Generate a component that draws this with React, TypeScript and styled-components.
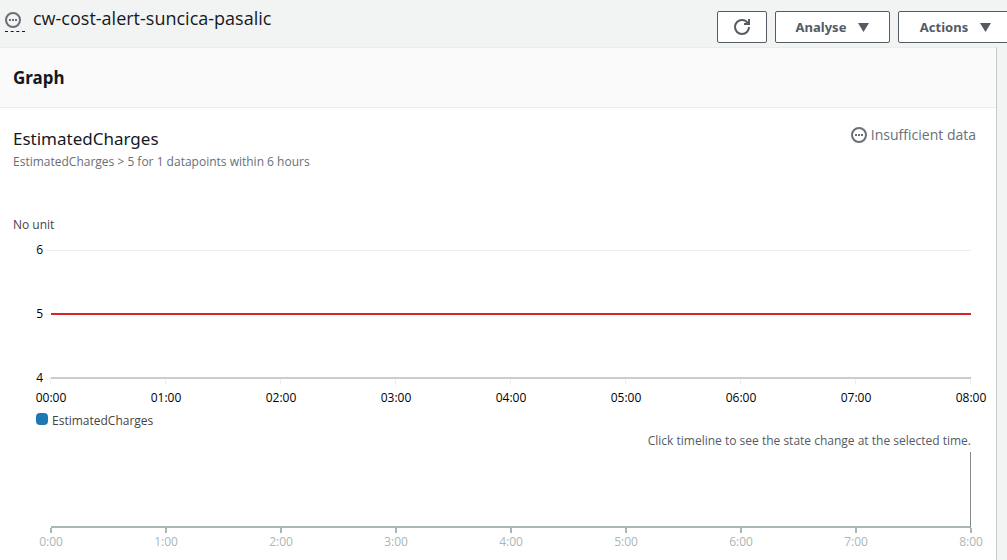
import React from "react";
import styled, { createGlobalStyle } from "styled-components";

const GlobalStyle = createGlobalStyle`
  *, *::before, *::after { box-sizing: border-box; }
  body {
    margin: 0;
    background: #f2f3f3;
    color: #16191f;
    font: 14px/20px "Open Sans", "Noto Sans", sans-serif;
    overflow-x: hidden;
  }
  h1, h2, h3, p { margin: 0; font-weight: 400; }
`;

const Page = styled.div`
  display: flex;
  flex-direction: column;
  min-height: 100vh;
  overflow: hidden;
`;

const Toolbar = styled.header`
  display: flex;
  justify-content: space-between;
  align-items: flex-start;
  padding: 10px 0 4px 5px;
`;

const AlarmName = styled.div`
  display: flex;
  gap: 8px;
`;

const StatusHint = styled.span`
  display: flex;
  align-items: flex-end;
  width: 20px;
  height: 22px;
  padding-bottom: 3px;
  border-bottom: 1px dashed #16191f;
`;

const Title = styled.h1`
  font-size: 18px;
  line-height: 16px;
`;

const Actions = styled.div`
  display: flex;
  gap: 8px;
  margin: 1px -6px 0 0;
`;

const Button = styled.button<{ $icon?: boolean }>`
  display: flex;
  align-items: center;
  justify-content: center;
  gap: 12px;
  width: ${(p) => (p.$icon ? "50px" : "115px")};
  height: 32px;
  padding: 0;
  border: 1px solid #545b64;
  border-radius: 2px;
  background: #fff;
  color: #545b64;
  font: 700 13px/20px "Noto Sans", sans-serif;
`;

const Panel = styled.main`
  flex: 1;
  margin-right: 10px;
  border-top: 1px solid #eaeded;
  border-right: 1px solid #c5cbcb;
  background: #fff;
`;

const PanelHeader = styled.div`
  padding: 18px 13px 17px;
  border-bottom: 1px solid #eaeded;
  background: #fafafa;
`;

const PanelTitle = styled.h2`
  font-family: "Noto Sans", sans-serif;
  font-size: 17px;
  font-weight: 700;
  line-height: 24px;
`;

const PanelBody = styled.div`
  padding: 19px 25px 0 13px;
`;

const MetricHeader = styled.div`
  display: flex;
  justify-content: space-between;
  align-items: flex-start;
  margin-right: -5px;
`;

const MetricTitle = styled.h3`
  font-family: "Noto Sans", sans-serif;
  font-size: 17px;
  line-height: 24px;
`;

const Note = styled.p<{ $color: string; $end?: boolean }>`
  color: ${(p) => p.$color};
  font-size: 12px;
  line-height: 22px;
  text-align: ${(p) => (p.$end ? "right" : "left")};
`;

const Status = styled.div`
  display: flex;
  align-items: center;
  gap: 4px;
  margin-top: -2px;
  color: #687078;
`;

const Chart = styled.section`
  margin-top: 41px;
`;

const Levels = styled.div`
  display: flex;
  flex-direction: column;
  gap: 44px;
  margin-top: 4px;
`;

const Level = styled.div`
  display: grid;
  grid-template-columns: 30px 3px 5px 1fr;
  align-items: center;
  height: 20px;
`;

const LevelLabel = styled.span`
  color: #000;
  font-size: 12px;
  line-height: 20px;
  text-align: right;
`;

const Stub = styled.span`
  grid-column: 3;
  height: 1px;
  background: #eee;
`;

const Line = styled.span<{ $color: string; $width: number }>`
  height: ${(p) => p.$width}px;
  background: ${(p) => p.$color};
`;

const Axis = styled.div`
  display: flex;
  justify-content: space-between;
  margin: 0 -1px;
`;

const GridAxis = styled(Axis)`
  margin: -9px -1px 0 37px;
`;

const Tick = styled.span<{ $strong?: boolean }>`
  display: flex;
  flex-direction: column;
  align-items: center;
  width: 2px;
  color: ${(p) => (p.$strong ? "#aab7b8" : "#000")};
  font-size: 12px;
  line-height: ${(p) => (p.$strong ? "18px" : "20px")};
  white-space: nowrap;

  &::before {
    content: "";
    width: 2px;
    height: ${(p) => (p.$strong ? "5px" : "9px")};
    border: 0 solid transparent;
    border-bottom-width: ${(p) => (p.$strong ? "0" : "4px")};
    background: ${(p) =>
      p.$strong ? "#aab7b8" : "linear-gradient(90deg, #eee 50%, transparent 50%)"};
    background-clip: padding-box;
  }
`;

const Legend = styled.div`
  display: flex;
  align-items: flex-start;
  gap: 4px;
  height: 20px;
  margin: 2px 0 0 23px;
`;

const Swatch = styled.span`
  width: 12px;
  height: 12px;
  margin-top: 3px;
  border-radius: 4px;
  background: #1f77b4;
`;

const Timeline = styled.section`
  margin-left: 38px;
`;

const Track = styled.div`
  height: 76px;
  border-right: 1px solid #888;
  border-bottom: 2px solid #aab7b8;
`;

const PendingIcon = () => (
  <svg width="16" height="16" viewBox="0 0 16 16" fill="none" aria-hidden="true">
    <circle cx="8" cy="8" r="7" stroke="#687078" strokeWidth="2" />
    <path d="M4 8h2M7 8h2M10 8h2" stroke="#687078" strokeWidth="2" />
  </svg>
);

const RefreshIcon = () => (
  <svg width="16" height="16" viewBox="0 0 16 16" fill="none" stroke="#545b64" strokeWidth="2" aria-hidden="true">
    <path d="M15 8a7 7 0 1 1-7-7c2.800 0 5 1.500 6 4" />
    <path d="M10 5h5V0" />
  </svg>
);

const Caret = () => (
  <svg width="11" height="9" viewBox="0 0 11 9" fill="#545b64" aria-hidden="true">
    <path d="M0 0h11L5.500 9z" />
  </svg>
);

const levels = [
  { value: 6, color: "#eee", width: 1 },
  { value: 5, color: "#d62728", width: 2 },
  { value: 4, color: "#ccc", width: 2 },
];
const hours = [0, 1, 2, 3, 4, 5, 6, 7, 8];

export default function App() {
  return (
    <Page>
      <GlobalStyle />
      <Toolbar>
        <AlarmName>
          <StatusHint><PendingIcon /></StatusHint>
          <Title>cw-cost-alert-suncica-pasalic</Title>
        </AlarmName>
        <Actions>
          <Button $icon aria-label="Refresh"><RefreshIcon /></Button>
          <Button>Analyse <Caret /></Button>
          <Button>Actions <Caret /></Button>
        </Actions>
      </Toolbar>
      <Panel>
        <PanelHeader><PanelTitle>Graph</PanelTitle></PanelHeader>
        <PanelBody>
          <MetricHeader>
            <div>
              <MetricTitle>EstimatedCharges</MetricTitle>
              <Note $color="#687078">EstimatedCharges &gt; 5 for 1 datapoints within 6 hours</Note>
            </div>
            <Status><PendingIcon />Insufficient data</Status>
          </MetricHeader>
          <Chart>
            <Note $color="#444">No unit</Note>
            <Levels>
              {levels.map((l) => (
                <Level key={l.value}>
                  <LevelLabel>{l.value}</LevelLabel>
                  <Stub />
                  <Line $color={l.color} $width={l.width} />
                </Level>
              ))}
            </Levels>
            <GridAxis>
              {hours.map((h) => (
                <Tick key={h}>{`0${h}:00`}</Tick>
              ))}
            </GridAxis>
            <Legend><Swatch /><Note $color="#444">EstimatedCharges</Note></Legend>
          </Chart>
          <Timeline>
            <Note $color="#545b64" $end>Click timeline to see the state change at the selected time.</Note>
            <Track />
            <Axis>
              {hours.map((h) => (
                <Tick key={h} $strong>{`${h}:00`}</Tick>
              ))}
            </Axis>
          </Timeline>
        </PanelBody>
      </Panel>
    </Page>
  );
}
